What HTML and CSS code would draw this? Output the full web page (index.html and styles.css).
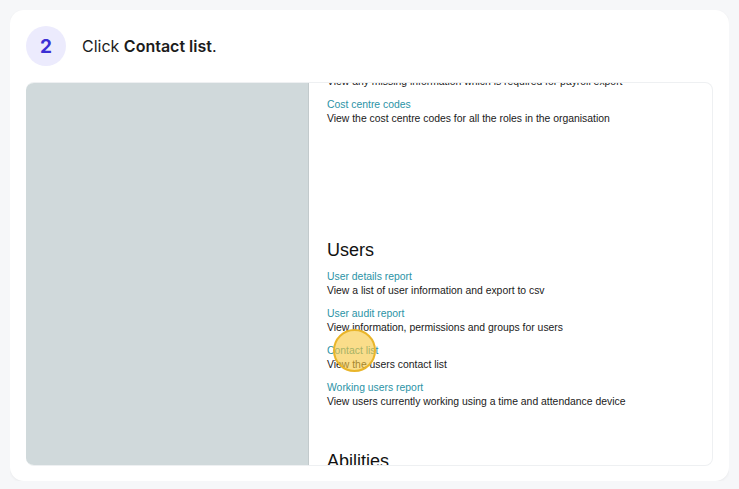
FILE: index.html
```html
<!DOCTYPE html>
<html lang="en">
<head>
  <meta charset="UTF-8" />
  <title>Step 2 - Click Contact list</title>
  <link rel="stylesheet" href="styles.css">
</head>
<body>
  <div class="step-card">
    <div class="step-head">
      <div class="step-num">2</div>
      <p class="step-text">Click <strong>Contact list</strong>.</p>
    </div>

    <!-- captured screen -->
    <div class="shot">
      <div class="shot-side"></div>
      <div class="shot-main">
        <div class="report clipped">
          <div class="report-desc">View any missing information which is required for payroll export</div>
        </div>
        <div class="report">
          <div class="report-link">Cost centre codes</div>
          <div class="report-desc">View the cost centre codes for all the roles in the organisation</div>
        </div>

        <h3 class="section-title users">Users</h3>
        <div class="report">
          <div class="report-link">User details report</div>
          <div class="report-desc">View a list of user information and export to csv</div>
        </div>
        <div class="report">
          <div class="report-link">User audit report</div>
          <div class="report-desc">View information, permissions and groups for users</div>
        </div>
        <div class="report target">
          <div class="report-link">Contact list</div>
          <div class="report-desc">View the users contact list</div>
          <span class="click-marker"></span>
        </div>
        <div class="report">
          <div class="report-link">Working users report</div>
          <div class="report-desc">View users currently working using a time and attendance device</div>
        </div>

        <h3 class="section-title abilities">Abilities</h3>
      </div>
    </div>
  </div>
</body>
</html>
```

FILE: styles.css
```css
body {
  margin: 10px;
  background: #f6f7f9;
  font-family: Inter, 'Liberation Sans', sans-serif;
}
.step-card {
  background: #fff;
  border-radius: 14px;
  padding: 16px 16px 15px;
  width: 687px;
  box-shadow: 0 1px 3px rgba(0,0,0,0.06);
}
.step-head {
  display: flex;
  align-items: center;
  gap: 16px;
  height: 40px;
  margin-bottom: 16px;
}
.step-num {
  width: 40px;
  height: 40px;
  border-radius: 50%;
  background: #ecebfd;
  color: #3b2fd4;
  font-weight: 700;
  font-size: 19px;
  display: flex;
  align-items: center;
  justify-content: center;
}
.step-text {
  margin: 0;
  font-size: 16px;
  color: #1c1c1c;
}
.step-text strong {
  font-weight: 600;
}
.shot {
  display: flex;
  height: 384px;
  border-radius: 8px;
  border: 1px solid #eef0f2;
  border-left: none;
  box-sizing: border-box;
  overflow: hidden;
}
.shot-side {
  width: 282px;
  background: #d0d9db;
  border-right: 1px solid #c2cacc;
  flex-shrink: 0;
}
.shot-main {
  flex: 1;
  padding-left: 18px;
  font-family: 'Liberation Sans', Arial, sans-serif;
  font-size: 10.4px;
  line-height: 14px;
  color: #1a1a1a;
}
.report {
  margin-bottom: 9px;
  position: relative;
}
.report.clipped {
  margin-top: -8px;
}
.report-link {
  color: #2b93a6;
}
.section-title {
  margin: 0;
  font-weight: 400;
  font-size: 18px;
  line-height: 22px;
  color: #111;
}
.section-title.users {
  margin-top: 113px;
  margin-bottom: 9px;
}
.section-title.abilities {
  margin-top: 41px;
}
.click-marker {
  position: absolute;
  left: 6px;
  top: -15px;
  width: 39px;
  height: 39px;
  border-radius: 50%;
  border: 2px solid #e9b52a;
  background: rgba(246, 198, 60, 0.6);
}
```
